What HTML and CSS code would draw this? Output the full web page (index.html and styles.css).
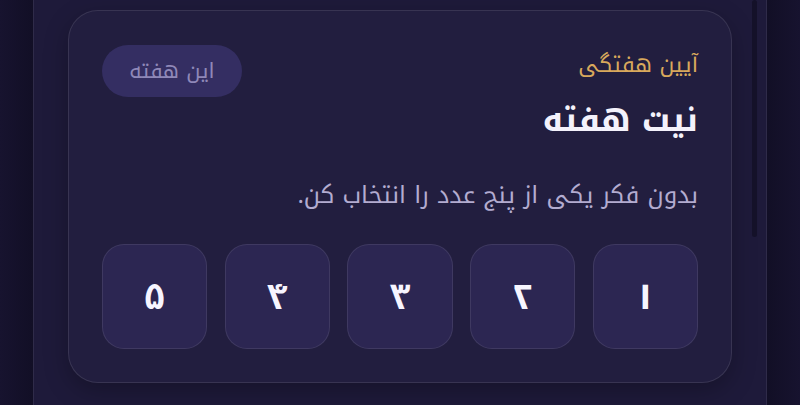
FILE: index.html
```html
<!DOCTYPE html>
<html lang="fa" dir="rtl">
<head>
<meta charset="utf-8">
<link rel="stylesheet" href="styles.css">
</head>
<body>
<div class="panel">
  <div class="scroll-thumb"></div>
  <section class="card">
    <header class="card-head">
      <div class="titles">
        <div class="eyebrow">آیین هفتگی</div>
        <h2 class="title">نیت هفته</h2>
      </div>
      <span class="badge">این هفته</span>
    </header>
    <p class="desc">بدون فکر یکی از پنج عدد را انتخاب کن.</p>
    <div class="choices">
      <button class="choice">۱</button>
      <button class="choice">۲</button>
      <button class="choice">۳</button>
      <button class="choice">۴</button>
      <button class="choice">۵</button>
    </div>
  </section>
</div>
</body>
</html>
```

FILE: styles.css
```css
* { box-sizing: border-box; }
html, body {
  margin: 0;
  height: 100%;
}
body {
  background: linear-gradient(90deg, #17132f 0%, #120f26 4%, #120f26 96%, #17132f 100%);
  font-family: "Noto Kufi Arabic", "DejaVu Sans", sans-serif;
  overflow: hidden;
}
.panel {
  position: relative;
  margin-right: 33px;
  margin-left: 33px;
  height: 405px;
  background: #1e1a3a;
  border-left: 1px solid rgba(255,255,255,0.08);
  border-right: 1px solid rgba(255,255,255,0.08);
  padding: 10px 34px 0 34px;
}
.scroll-thumb {
  position: absolute;
  left: 718px;
  top: 0;
  width: 5px;
  height: 237px;
  border-radius: 3px;
  background: #141129;
}
.card {
  background: #221e3f;
  border: 1px solid rgba(255,255,255,0.1);
  border-radius: 30px;
  padding: 34px 33px 33px 33px;
  box-shadow: 0 8px 24px rgba(0,0,0,0.25);
}
.card-head {
  display: flex;
  justify-content: space-between;
  align-items: flex-start;
}
.titles {
  display: flex;
  flex-direction: column;
}
.eyebrow {
  color: #d9a95c;
  font-size: 22px;
  line-height: 30px;
  margin-top: 5px;
}
.title {
  margin: 18px 0 0;
  color: #f4f2fb;
  font-size: 33px;
  font-weight: 700;
  line-height: 44px;
}
.badge {
  display: inline-flex;
  align-items: center;
  justify-content: center;
  width: 140px;
  height: 52px;
  border-radius: 26px;
  background: #342e62;
  color: #8f88b8;
  font-size: 21px;
  line-height: 1;
}
.desc {
  margin: 37px 0 0;
  color: #b3acd0;
  font-size: 24px;
  line-height: 32px;
}
.choices {
  display: grid;
  grid-template-columns: repeat(5, 1fr);
  gap: 17.5px;
  margin-top: 33px;
}
.choice {
  height: 105px;
  border-radius: 22px;
  background: #2c2652;
  border: 1px solid rgba(255,255,255,0.09);
  color: #f7f5ff;
  font-family: inherit;
  font-size: 36px;
  font-weight: 700;
  line-height: 1;
  padding: 0;
}
```
